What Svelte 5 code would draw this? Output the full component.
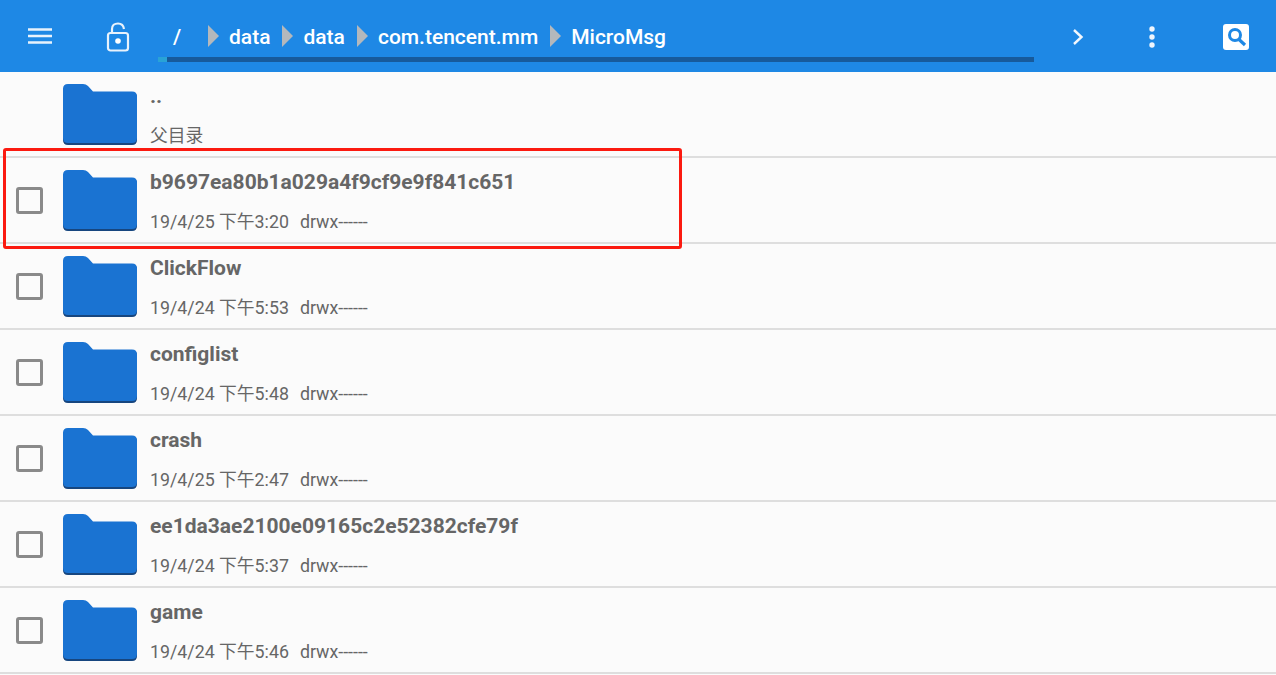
<script>
  const rows = [
    { name: 'b9697ea80b1a029a4f9cf9e9f841c651', date: '19/4/25 下午3:20' },
    { name: 'ClickFlow', date: '19/4/24 下午5:53' },
    { name: 'configlist', date: '19/4/24 下午5:48' },
    { name: 'crash', date: '19/4/25 下午2:47' },
    { name: 'ee1da3ae2100e09165c2e52382cfe79f', date: '19/4/24 下午5:37' },
    { name: 'game', date: '19/4/24 下午5:46' }
  ];
  const crumbs = ['data', 'data', 'com.tencent.mm', 'MicroMsg'];
</script>

{#snippet folder()}
  <svg class="folder" width="74" height="62" viewBox="0 0 74 62">
    <path d="M5 2H20Q23 2 25 4L29 8.500H69Q74 8.500 74 13.500V56Q74 61 69 61H5Q0 61 0 56V7Q0 2 5 2Z" fill="#17467f"/>
    <path d="M5 0H20Q23 0 25 2L30 7.500H69Q74 7.500 74 12.500V54Q74 59 69 59H5Q0 59 0 54V5Q0 0 5 0Z" fill="#1a73d2"/>
  </svg>
{/snippet}

<div class="page">
  <header class="bar">
    <svg class="menu" width="26" height="20" viewBox="0 0 26 20">
      <path d="M1 3.500H25M1 10H25M1 16.500H25" stroke="#e8f2fc" stroke-width="2.600" fill="none"/>
    </svg>
    <svg class="lock" width="24" height="30" viewBox="0 0 24 30">
      <path d="M6 11V7C6 3.500 8.500 1.500 12 1.500C15.200 1.500 17.500 3.500 18 7" stroke="#e8f2fc" stroke-width="2.200" fill="none"/>
      <rect x="2" y="11" width="20" height="17.500" rx="2.500" stroke="#e8f2fc" stroke-width="2.200" fill="none"/>
      <circle cx="12" cy="19" r="2.800" fill="#fff"/>
    </svg>
    <div class="path">
      <div class="crumbs">
        <span class="root">/</span>
        {#each crumbs as c}
          <svg class="tri" width="11" height="22" viewBox="0 0 11 22"><path d="M0 0L11 11L0 22Z" fill="#b4b8bc"/></svg>
          <span class="crumb">{c}</span>
        {/each}
      </div>
      <div class="track"><div class="thumb"></div></div>
    </div>
    <svg class="chev" width="12" height="18" viewBox="0 0 12 18">
      <path d="M2 2L9.500 9L2 16" stroke="#f2f7fd" stroke-width="2.400" fill="none"/>
    </svg>
    <svg class="dots" width="8" height="24" viewBox="0 0 8 24">
      <circle cx="4" cy="4" r="2.700" fill="#eef5fd"/>
      <circle cx="4" cy="12" r="2.700" fill="#eef5fd"/>
      <circle cx="4" cy="20" r="2.700" fill="#eef5fd"/>
    </svg>
    <svg class="search" width="26" height="26" viewBox="0 0 26 26">
      <rect width="26" height="26" rx="3" fill="#fff"/>
      <circle cx="12" cy="11" r="5.500" stroke="#1e88e5" stroke-width="3" fill="none"/>
      <path d="M16 15.500L22 21" stroke="#1e88e5" stroke-width="3.200"/>
    </svg>
  </header>

  <main class="list">
    <div class="row parent">
      <div class="check-space"></div>
      {@render folder()}
      <div class="text">
        <div class="name">..</div>
        <div class="meta">父目录</div>
      </div>
    </div>
    {#each rows as r}
      <div class="row">
        <div class="check-space"><span class="check"></span></div>
        {@render folder()}
        <div class="text">
          <div class="name">{r.name}</div>
          <div class="meta"><span class="date">{r.date}</span><span>drwx------</span></div>
        </div>
      </div>
    {/each}
  </main>

  <div class="highlight"></div>
</div>

<style>
  :global(body) {
    margin: 0;
    background: #fbfbfb;
  }
  .page {
    position: relative;
    width: 1276px;
    height: 675px;
    overflow: hidden;
    background: #fbfbfb;
    font-family: Roboto, "Noto Sans CJK SC", sans-serif;
  }
  .bar {
    height: 72px;
    background: #1e88e5;
    display: flex;
    align-items: flex-start;
  }
  .menu {
    margin: 26px 0 0 27px;
  }
  .lock {
    margin: 22px 0 0 53px;
  }
  .path {
    margin-left: 28px;
    width: 876px;
    flex: none;
  }
  .crumbs {
    height: 57px;
    display: flex;
    align-items: center;
    padding-top: 16px;
    box-sizing: border-box;
    color: #fff;
    font-size: 21px;
    font-weight: 500;
    white-space: nowrap;
  }
  .root {
    width: 50px;
    padding-left: 15px;
    box-sizing: border-box;
  }
  .tri {
    margin-right: 10px;
    margin-top: -2px;
  }
  .crumb {
    margin-right: 12px;
  }
  .track {
    height: 5px;
    background: #175a9b;
  }
  .thumb {
    width: 9px;
    height: 5px;
    background: #29a3d6;
  }
  .chev {
    margin: 28px 0 0 38px;
  }
  .dots {
    margin: 25px 0 0 64px;
  }
  .search {
    margin: 24px 0 0 67px;
  }
  .row {
    height: 86px;
    box-sizing: border-box;
    border-bottom: 2px solid #dedede;
    display: flex;
    align-items: flex-start;
  }
  .check-space {
    width: 63px;
    flex: none;
    height: 84px;
    display: flex;
    align-items: center;
    padding-left: 16px;
    box-sizing: border-box;
  }
  .check {
    width: 27px;
    height: 27px;
    box-sizing: border-box;
    border: 3px solid #8a8a8a;
    border-radius: 3px;
  }
  .folder {
    margin-top: 12px;
    flex: none;
    filter: blur(0.4px);
  }
  .text {
    margin-left: 13px;
    color: #666;
  }
  .name {
    font-size: 21px;
    font-weight: 700;
    line-height: 24px;
    margin-top: 12px;
  }
  .meta {
    font-size: 17.800px;
    line-height: 20px;
    margin-top: 18px;
    display: flex;
    gap: 11px;
  }
  .highlight {
    position: absolute;
    left: 3px;
    top: 148px;
    width: 679px;
    height: 101px;
    box-sizing: border-box;
    border: 3px solid #fb1a10;
    border-radius: 3px;
  }
</style>
